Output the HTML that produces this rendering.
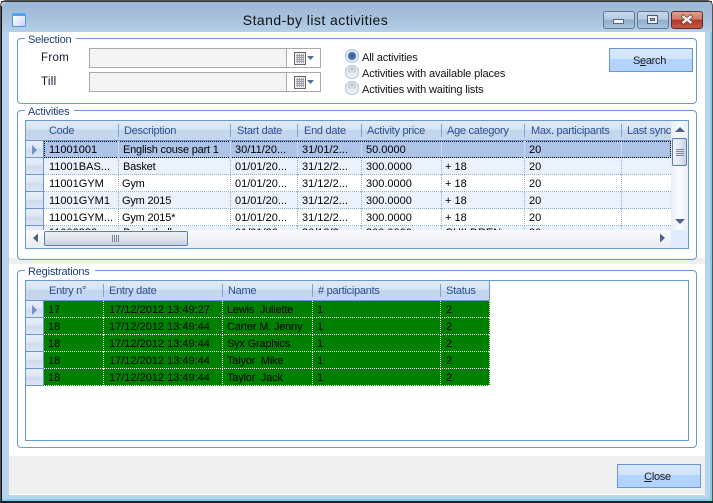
<!DOCTYPE html>
<html><head><meta charset="utf-8">
<style>
html,body{margin:0;padding:0;width:713px;height:503px;overflow:hidden;background:#fff}
*{box-sizing:border-box}
body{font-family:"Liberation Sans",sans-serif;font-size:11px;color:#000;position:relative}
.a{position:absolute}
.t{position:absolute;white-space:nowrap;line-height:13px;letter-spacing:-.13px}
.grp{position:absolute;border:1px solid #6a97d3;border-radius:4px}
.leg{position:absolute;background:#fff;padding:0 5px 0 3px;color:#1e3f7a;line-height:13px;white-space:nowrap;letter-spacing:-.2px}
.inp{position:absolute;left:89px;width:232px;height:20px;background:#fff;border:1px solid #a9a9a9}
.inp i{position:absolute;left:0;top:0;width:197px;height:18px;background:#f3f3f3;border-right:1px solid #a9a9a9}
.rad{position:absolute;left:345px;width:14px;height:14px;border-radius:50%;border:1px solid #a4bcdc;box-shadow:inset 0 0 0 1px #f4f7fb;background:linear-gradient(#b8b8b8,#e0e0e0 55%,#fafafa)}
.btn{position:absolute;width:84px;height:24px;border:1px solid #6a97d3;background:linear-gradient(#d9e8fd 0,#d0e3fc 45%,#b2d3fc 46%,#b2d3fc 100%);text-align:center;line-height:24px;color:#1a1a1a;letter-spacing:-.3px;padding-right:3px}
.grid{position:absolute;left:25px;width:664px;background:#fff;border:1px solid #6a97d3;overflow:hidden}
.hd{position:absolute;top:0;height:20px;background:linear-gradient(#e3ecf8 0,#d5e2f3 45%,#c3d5ec 50%,#c6d8ee 100%);border-bottom:1px solid #6a97d3;width:100%}
.hc{position:absolute;top:4px;color:#2a4f8a;white-space:nowrap;line-height:13px;letter-spacing:-.27px}
.hs{position:absolute;top:3px;width:1px;height:13px;background:#7ea3d6}
.rh{position:absolute;left:0;width:18px;height:17px;background:linear-gradient(#e8eff9 0,#dde7f5 45%,#cfdcee 55%,#dbe6f4 100%);border-bottom:1px solid #6a97d3;border-right:1px solid #6a97d3}
.row{position:absolute;left:18px;height:17px;background-image:repeating-linear-gradient(90deg,#8fb0da 0 1px,transparent 1px 2px);background-size:100% 1px;background-position:0 100%;background-repeat:no-repeat}
.row .c{position:absolute;top:2px;white-space:nowrap;line-height:14px;color:#000}
.part .c{top:0}
.l{letter-spacing:-.2px}
.v{position:absolute;top:0;height:17px;width:1px;background:repeating-linear-gradient(#8fb0da 0 1px,transparent 1px 2px)}
.sel .v{background:repeating-linear-gradient(#e4ecf8 0 1px,transparent 1px 2px)}
.sel{background-image:repeating-linear-gradient(90deg,#000 0 1px,transparent 1px 2px),repeating-linear-gradient(90deg,#000 0 1px,transparent 1px 2px),repeating-linear-gradient(#000 0 1px,transparent 1px 2px),repeating-linear-gradient(#000 0 1px,transparent 1px 2px);background-size:100% 1px,100% 1px,1px 100%,1px 100%;background-position:0 0,0 100%,0 0,100% 0}
.gr .row{background-color:#008000;background-image:repeating-linear-gradient(90deg,#fff 0 1px,#008000 1px 2px)}
.gr .v{background:repeating-linear-gradient(#fff 0 1px,#008000 1px 2px)}
.win{position:absolute;width:32px}
</style></head><body>
<!-- window frame -->
<div class="a" style="left:0;top:0;width:713px;height:503px;background:#bad3ee;border:1px solid #555;border-radius:6px 6px 0 0"></div>
<div class="a" style="left:1px;top:6px;width:1px;height:495px;background:#111"></div>
<div class="a" style="left:2px;top:2px;width:710px;height:30px;background:linear-gradient(#9cb8d6 0,#a6c0dc 50%,#b6cfe9 100%);border-radius:5px 5px 0 0"></div>
<div class="a" style="left:1px;top:1px;width:711px;height:1px;background:#333"></div>
<div class="a" style="left:710px;top:32px;width:2px;height:469px;background:#7dd0ea"></div>
<div class="a" style="left:2px;top:499px;width:710px;height:2px;background:#7dd0ea"></div>
<div class="a" style="left:0;top:501px;width:713px;height:2px;background:#222"></div>
<!-- client -->
<div class="a" style="left:9px;top:32px;width:696px;height:463px;background:#fff"></div>
<div class="a" style="left:9px;top:258px;width:696px;height:6px;background:#efefef"></div>
<div class="a" style="left:9px;top:456px;width:696px;height:38px;background:#efefef"></div>
<!-- title icon -->
<div class="a" style="left:12px;top:13px;width:14px;height:14px;border:1px solid #3b9bf0;border-top:3px solid #4ba6f4;border-radius:2px;background:linear-gradient(135deg,#fff,#cfd4f7)"></div>
<div class="t" style="left:0;top:12px;width:631px;text-align:center;font-size:14px;line-height:17px;color:#111;letter-spacing:.45px">Stand-by list activities</div>
<!-- window buttons -->
<div class="a win" style="left:603px;top:11px;height:18px;border:1px solid #5f7590;border-radius:3px;background:linear-gradient(#c6d8ea 0,#b4cbe2 45%,#8fadcc 50%,#a9c4de 100%)"></div>
<div class="a" style="left:613px;top:19px;width:11px;height:5px;background:#f1f4f8;border:1px solid #56677d"></div>
<div class="a win" style="left:637px;top:11px;height:18px;border:1px solid #5f7590;border-radius:3px;background:linear-gradient(#c6d8ea 0,#b4cbe2 45%,#8fadcc 50%,#a9c4de 100%)"></div>
<div class="a" style="left:647px;top:15px;width:11px;height:9px;background:#eaf0f6;border:1px solid #4c5b70"></div>
<div class="a" style="left:650px;top:18px;width:5px;height:3px;background:#9db8d4;border:1px solid #4c5b70"></div>
<div class="a win" style="left:671px;top:11px;height:18px;border:1px solid #5c2a28;border-radius:3px;background:linear-gradient(#e0a090 0,#cf7b68 45%,#b03a26 50%,#c65a42 100%)"></div>
<svg class="a" style="left:680px;top:14px" width="14" height="11"><path d="M2 1.500 L12 9.500 M12 1.500 L2 9.500" stroke="#4a2a28" stroke-width="3.600"/><path d="M2.500 2 L11.500 9 M11.500 2 L2.500 9" stroke="#f6f0ee" stroke-width="2.400"/></svg>

<!-- selection -->
<div class="grp" style="left:17px;top:38px;width:680px;height:66px"></div>
<div class="leg" style="left:25px;top:33px;padding-top:1px">Selection</div>
<div class="t" style="left:41px;top:52px;color:#1a1030;font-size:11.5px;letter-spacing:.3px">From</div>
<div class="t" style="left:41px;top:76px;color:#1a1030;font-size:11.5px;letter-spacing:.3px">Till</div>
<div class="inp" style="top:48px"><i></i></div>
<div class="inp" style="top:72px"><i></i></div>
<svg class="a" style="left:293px;top:51px" width="24" height="15"><rect x="1.500" y="1.500" width="11" height="12" fill="#eee" stroke="#6b6460"/><path d="M3 4.500h8M3 6.500h8M3 8.500h8M3 10.500h8M4.500 3v9M6.500 3v9M8.500 3v9M10.500 3v9" stroke="#a0a0ac" stroke-width="1"/><path d="M14 5h7l-3.500 4z" fill="#4f6a96"/></svg>
<svg class="a" style="left:293px;top:75px" width="24" height="15"><rect x="1.500" y="1.500" width="11" height="12" fill="#eee" stroke="#6b6460"/><path d="M3 4.500h8M3 6.500h8M3 8.500h8M3 10.500h8M4.500 3v9M6.500 3v9M8.500 3v9M10.500 3v9" stroke="#a0a0ac" stroke-width="1"/><path d="M14 5h7l-3.500 4z" fill="#4f6a96"/></svg>
<div class="rad" style="top:49px;background:radial-gradient(circle,#3f5f96 0,#4a6ba3 38%,#c5d3e6 52%,#eef2f8 100%)"></div>
<div class="rad" style="top:65px"></div>
<div class="rad" style="top:81px"></div>
<div class="t" style="left:362px;top:52px;color:#111">All activities</div>
<div class="t" style="left:362px;top:68px;color:#111">Activities with available places</div>
<div class="t" style="left:362px;top:84px;color:#111">Activities with waiting lists</div>
<div class="btn" style="left:609px;top:48px">S<u>e</u>arch</div>

<!-- activities -->
<div class="grp" style="left:17px;top:110px;width:680px;height:150px"></div>
<div class="leg" style="left:25px;top:105px;padding-top:1px">Activities</div>
<div class="grid" style="top:120px;height:129px">
  <div class="hd"></div>
  <div class="hc" style="left:23px">Code</div><div class="hs" style="left:92px"></div>
  <div class="hc" style="left:98px">Description</div><div class="hs" style="left:204px"></div>
  <div class="hc" style="left:211px">Start date</div><div class="hs" style="left:271px"></div>
  <div class="hc" style="left:278px">End date</div><div class="hs" style="left:335px"></div>
  <div class="hc" style="left:341px">Activity price</div><div class="hs" style="left:415px"></div>
  <div class="hc" style="left:421px">Age category</div><div class="hs" style="left:498px"></div>
  <div class="hc" style="left:505px">Max. participants</div><div class="hs" style="left:595px"></div>
  <div class="hc" style="left:601px;width:44px;overflow:hidden">Last sync</div>

  <div class="rh" style="top:20px"></div><div class="rh" style="top:37px"></div><div class="rh" style="top:54px"></div><div class="rh" style="top:71px"></div><div class="rh" style="top:88px"></div><div class="rh" style="top:105px"></div>
  <svg class="a" style="left:5px;top:24px" width="7" height="10"><path d="M1 0 L6 5 L1 10z" fill="#6d93c9"/></svg>

  <div class="row sel" style="top:20px;width:627px;background-color:#adc3e7">
    <span class="c" style="left:5px">11001001</span><span class="c l" style="left:79px">English couse part 1</span><span class="c" style="left:191px">30/11/20...</span><span class="c" style="left:258px">31/01/2...</span><span class="c" style="left:322px">50.0000</span><span class="c" style="left:485px">20</span>
    <i class="v" style="left:74px"></i><i class="v" style="left:186px"></i><i class="v" style="left:253px"></i><i class="v" style="left:317px"></i><i class="v" style="left:397px"></i><i class="v" style="left:480px"></i><i class="v" style="left:577px"></i>
  </div>
  <div class="row" style="top:37px;width:627px;background-color:#eaf2fd">
    <span class="c" style="left:5px">11001BAS...</span><span class="c l" style="left:79px">Basket</span><span class="c" style="left:191px">01/01/20...</span><span class="c" style="left:258px">31/12/2...</span><span class="c" style="left:322px">300.0000</span><span class="c" style="left:401px">+ 18</span><span class="c" style="left:485px">20</span>
    <i class="v" style="left:74px"></i><i class="v" style="left:186px"></i><i class="v" style="left:253px"></i><i class="v" style="left:317px"></i><i class="v" style="left:397px"></i><i class="v" style="left:480px"></i><i class="v" style="left:577px"></i>
  </div>
  <div class="row" style="top:54px;width:627px;background-color:#fff">
    <span class="c" style="left:5px">11001GYM</span><span class="c l" style="left:78px">Gym</span><span class="c" style="left:191px">01/01/20...</span><span class="c" style="left:258px">31/12/2...</span><span class="c" style="left:322px">300.0000</span><span class="c" style="left:401px">+ 18</span><span class="c" style="left:485px">20</span>
    <i class="v" style="left:74px"></i><i class="v" style="left:186px"></i><i class="v" style="left:253px"></i><i class="v" style="left:317px"></i><i class="v" style="left:397px"></i><i class="v" style="left:480px"></i><i class="v" style="left:577px"></i>
  </div>
  <div class="row" style="top:71px;width:627px;background-color:#eaf2fd">
    <span class="c" style="left:5px">11001GYM1</span><span class="c l" style="left:78px">Gym 2015</span><span class="c" style="left:191px">01/01/20...</span><span class="c" style="left:258px">31/12/2...</span><span class="c" style="left:322px">300.0000</span><span class="c" style="left:401px">+ 18</span><span class="c" style="left:485px">20</span>
    <i class="v" style="left:74px"></i><i class="v" style="left:186px"></i><i class="v" style="left:253px"></i><i class="v" style="left:317px"></i><i class="v" style="left:397px"></i><i class="v" style="left:480px"></i><i class="v" style="left:577px"></i>
  </div>
  <div class="row" style="top:88px;width:627px;background-color:#fff">
    <span class="c" style="left:5px">11001GYM...</span><span class="c l" style="left:78px">Gym 2015*</span><span class="c" style="left:191px">01/01/20...</span><span class="c" style="left:258px">31/12/2...</span><span class="c" style="left:322px">300.0000</span><span class="c" style="left:401px">+ 18</span><span class="c" style="left:485px">20</span>
    <i class="v" style="left:74px"></i><i class="v" style="left:186px"></i><i class="v" style="left:253px"></i><i class="v" style="left:317px"></i><i class="v" style="left:397px"></i><i class="v" style="left:480px"></i><i class="v" style="left:577px"></i>
  </div>
  <div class="row part" style="top:105px;width:627px;background-color:#eaf2fd">
    <span class="c" style="left:5px">11002222</span><span class="c l" style="left:79px">Basketball</span><span class="c" style="left:191px">01/01/20...</span><span class="c" style="left:258px">30/12/2...</span><span class="c" style="left:322px">300.0000</span><span class="c" style="left:401px">CHILDREN</span><span class="c" style="left:485px">20</span>
    <i class="v" style="left:74px"></i><i class="v" style="left:186px"></i><i class="v" style="left:253px"></i><i class="v" style="left:317px"></i><i class="v" style="left:397px"></i><i class="v" style="left:480px"></i><i class="v" style="left:577px"></i>
  </div>

  <!-- v scrollbar -->
  <div class="a" style="left:645px;top:0;width:17px;height:109px;background:linear-gradient(90deg,#e6edf7,#fbfcfe 50%,#e9eff8)"></div>
  <svg class="a" style="left:648px;top:5px" width="12" height="7"><path d="M1 6 L6 1 L11 6z" fill="#4b6187"/></svg>
  <svg class="a" style="left:648px;top:97px" width="12" height="7"><path d="M1 1 L11 1 L6 6z" fill="#4b6187"/></svg>
  <div class="a" style="left:646px;top:17px;width:15px;height:28px;border:1px solid #5e7fab;border-radius:2px;background:linear-gradient(90deg,#f2f5fa,#dde6f2 60%,#c4d2e4)"></div>
  <div class="a" style="left:650px;top:28px;width:8px;height:7px;background:repeating-linear-gradient(#7d8694 0,#7d8694 1px,transparent 1px,transparent 2px)"></div>
  <!-- h scrollbar -->
  <div class="a" style="left:0;top:109px;width:645px;height:18px;background:linear-gradient(#fafbfc,#e9ecf0)"></div>
  <div class="a" style="left:645px;top:109px;width:17px;height:18px;background:#e0ecfb"></div>
  <svg class="a" style="left:6px;top:112px" width="7" height="10"><path d="M6 0.500 L1 5 L6 9.500z" fill="#4b6187"/></svg>
  <svg class="a" style="left:633px;top:112px" width="7" height="10"><path d="M1 0.500 L6 5 L1 9.500z" fill="#4b6187"/></svg>
  <div class="a" style="left:18px;top:110px;width:144px;height:15px;border:1px solid #5e7fab;border-radius:2px;background:linear-gradient(#eef1f6,#dde3ec 55%,#c4cedd)"></div>
  <div class="a" style="left:86px;top:114px;width:7px;height:7px;background:repeating-linear-gradient(90deg,#7d8694 0,#7d8694 1px,transparent 1px,transparent 2px)"></div>
</div>

<!-- registrations -->
<div class="grp" style="left:17px;top:270px;width:680px;height:178px"></div>
<div class="leg" style="left:25px;top:265px;padding-top:1px">Registrations</div>
<div class="grid gr" style="top:280px;height:161px">
  <div class="hd" style="width:464px;border-right:1px solid #6a97d3"></div>
  <div class="hc" style="left:23px">Entry n°</div><div class="hs" style="left:77px"></div>
  <div class="hc" style="left:83px">Entry date</div><div class="hs" style="left:196px"></div>
  <div class="hc" style="left:202px">Name</div><div class="hs" style="left:286px"></div>
  <div class="hc" style="left:292px"># participants</div><div class="hs" style="left:414px"></div>
  <div class="hc" style="left:420px">Status</div>

  <div class="rh" style="top:20px"></div><div class="rh" style="top:37px"></div><div class="rh" style="top:54px"></div><div class="rh" style="top:71px"></div><div class="rh" style="top:88px"></div>
  <svg class="a" style="left:5px;top:24px" width="7" height="10"><path d="M1 0 L6 5 L1 10z" fill="#6d93c9"/></svg>

  <div class="row" style="top:20px;width:446px"><span class="c" style="left:4px">17</span><span class="c" style="left:65px">17/12/2012 13:49:27</span><span class="c l" style="left:183px">Lewis&nbsp; Juliette</span><span class="c" style="left:273px">1</span><span class="c" style="left:402px">2</span><i class="v" style="left:59px"></i><i class="v" style="left:178px"></i><i class="v" style="left:268px"></i><i class="v" style="left:396px"></i><i class="v" style="left:445px"></i></div>
  <div class="row" style="top:37px;width:446px"><span class="c" style="left:4px">18</span><span class="c" style="left:65px">17/12/2012 13:49:44</span><span class="c l" style="left:183px">Carter M. Jenny</span><span class="c" style="left:273px">1</span><span class="c" style="left:402px">2</span><i class="v" style="left:59px"></i><i class="v" style="left:178px"></i><i class="v" style="left:268px"></i><i class="v" style="left:396px"></i><i class="v" style="left:445px"></i></div>
  <div class="row" style="top:54px;width:446px"><span class="c" style="left:4px">18</span><span class="c" style="left:65px">17/12/2012 13:49:44</span><span class="c l" style="left:183px">Syx Graphics</span><span class="c" style="left:273px">1</span><span class="c" style="left:402px">2</span><i class="v" style="left:59px"></i><i class="v" style="left:178px"></i><i class="v" style="left:268px"></i><i class="v" style="left:396px"></i><i class="v" style="left:445px"></i></div>
  <div class="row" style="top:71px;width:446px"><span class="c" style="left:4px">18</span><span class="c" style="left:65px">17/12/2012 13:49:44</span><span class="c l" style="left:183px">Talyor&nbsp; Mike</span><span class="c" style="left:273px">1</span><span class="c" style="left:402px">2</span><i class="v" style="left:59px"></i><i class="v" style="left:178px"></i><i class="v" style="left:268px"></i><i class="v" style="left:396px"></i><i class="v" style="left:445px"></i></div>
  <div class="row" style="top:88px;width:446px"><span class="c" style="left:4px">18</span><span class="c" style="left:65px">17/12/2012 13:49:44</span><span class="c l" style="left:183px">Taylor&nbsp; Jack</span><span class="c" style="left:273px">1</span><span class="c" style="left:402px">2</span><i class="v" style="left:59px"></i><i class="v" style="left:178px"></i><i class="v" style="left:268px"></i><i class="v" style="left:396px"></i><i class="v" style="left:445px"></i></div>
</div>

<div class="btn" style="left:617px;top:464px"><u>C</u>lose</div>
</body></html>
